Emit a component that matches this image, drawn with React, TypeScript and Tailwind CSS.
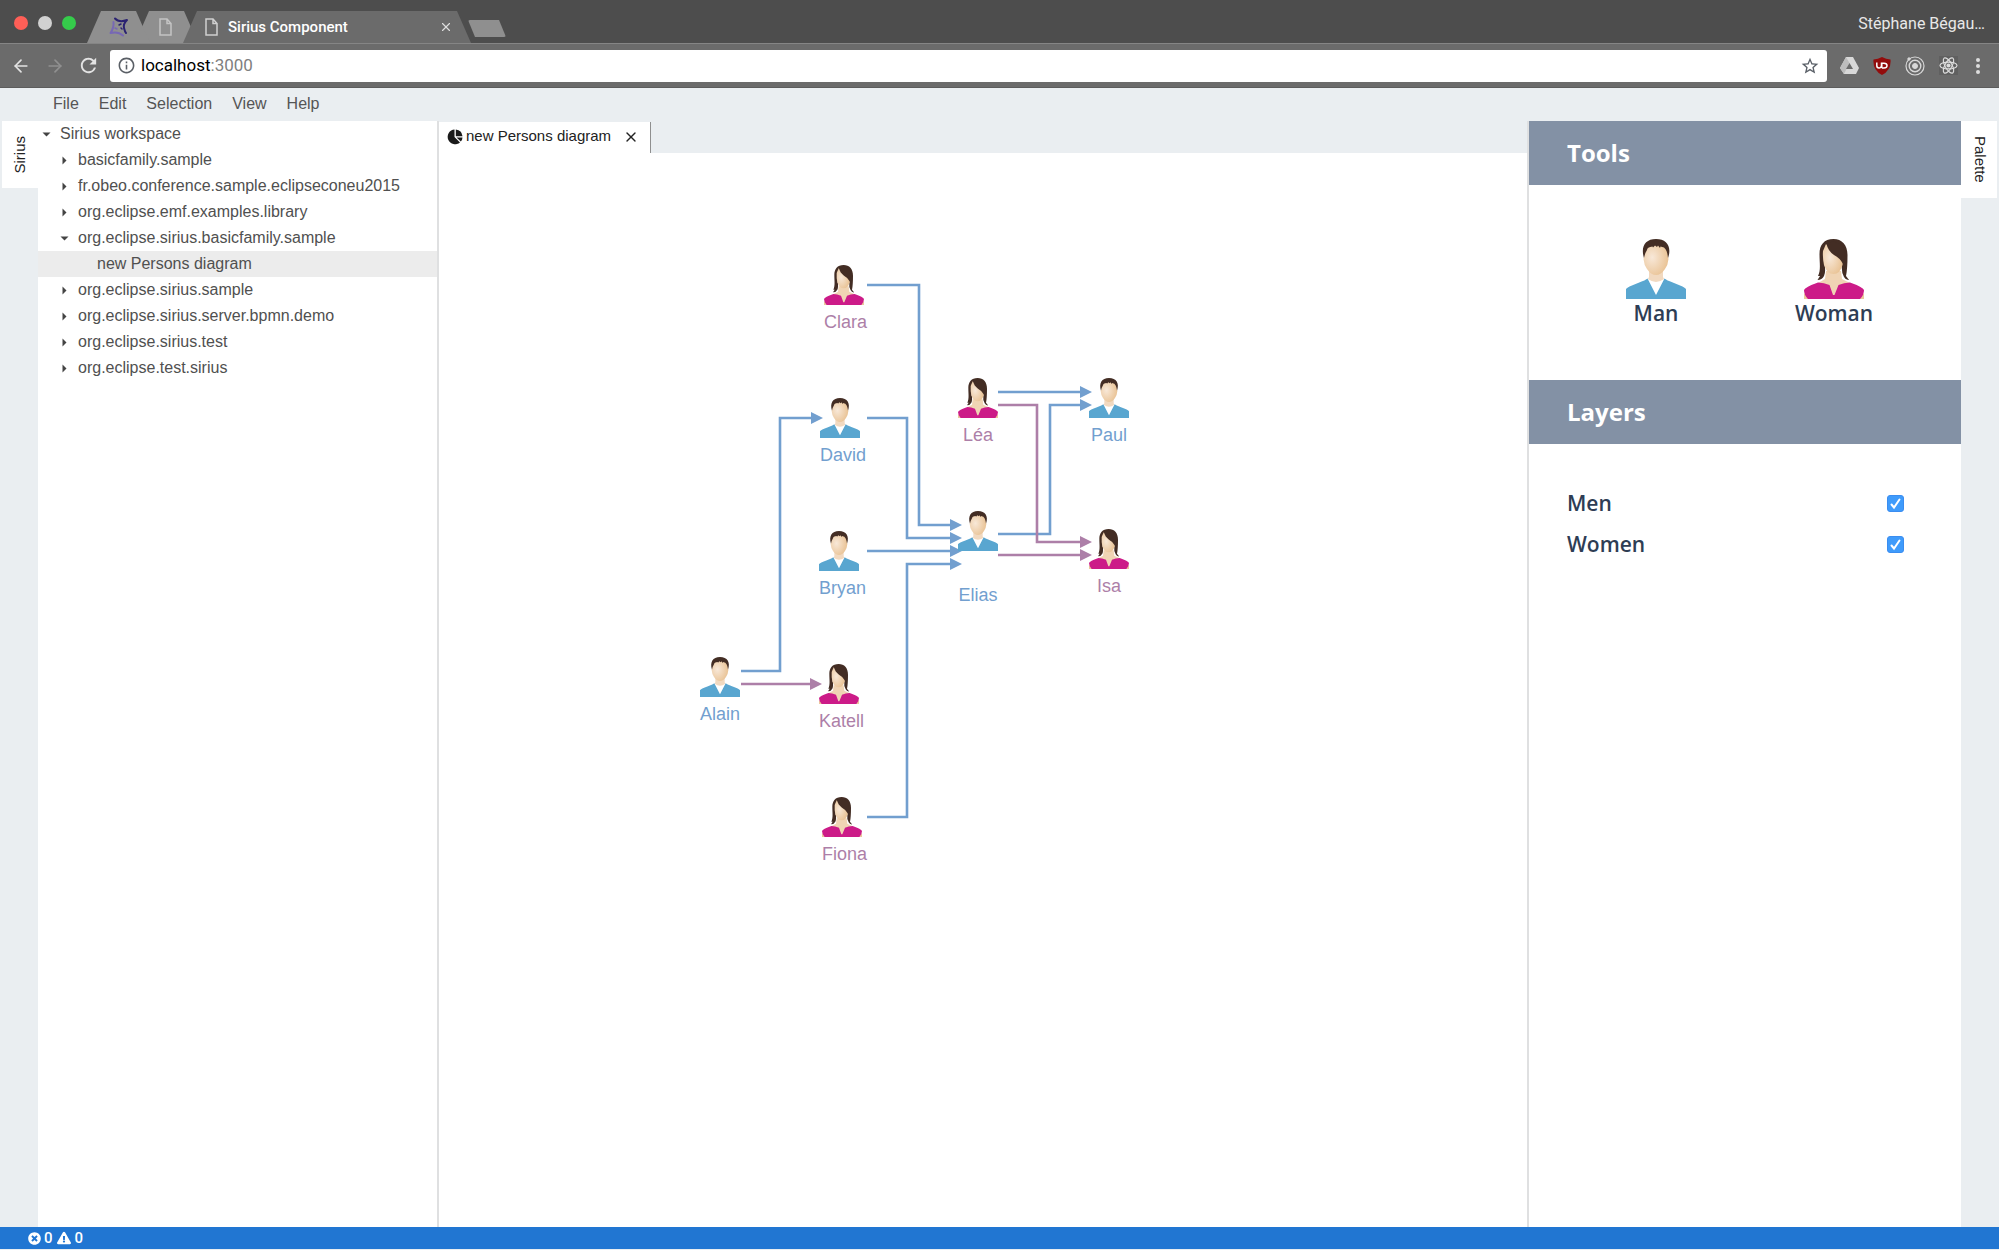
import { useState } from "react";
import type { ReactNode } from "react";
import { ArrowLeft, ArrowRight, X } from "lucide-react";
import { MdRefresh, MdStarBorder, MdInfoOutline } from "react-icons/md";
import { FaTimesCircle, FaExclamationTriangle } from "react-icons/fa";

type Sex = "man" | "woman";

type TreeItem = {
  label: string;
  level: 0 | 1 | 2;
  state: "open" | "closed" | "leaf";
  selected?: boolean;
};

const treeItems: TreeItem[] = [
  { label: "Sirius workspace", level: 0, state: "open" },
  { label: "basicfamily.sample", level: 1, state: "closed" },
  { label: "fr.obeo.conference.sample.eclipseconeu2015", level: 1, state: "closed" },
  { label: "org.eclipse.emf.examples.library", level: 1, state: "closed" },
  { label: "org.eclipse.sirius.basicfamily.sample", level: 1, state: "open" },
  { label: "new Persons diagram", level: 2, state: "leaf", selected: true },
  { label: "org.eclipse.sirius.sample", level: 1, state: "closed" },
  { label: "org.eclipse.sirius.server.bpmn.demo", level: 1, state: "closed" },
  { label: "org.eclipse.sirius.test", level: 1, state: "closed" },
  { label: "org.eclipse.test.sirius", level: 1, state: "closed" },
];

const levelPadding = ["pl-[4px]", "pl-[22px]", "pl-[41px]"];

type Person = {
  name: string;
  sex: Sex;
  x: number;
  y: number;
  align?: "start";
  lowLabel?: boolean;
};

const persons: Person[] = [
  { name: "Clara", sex: "woman", x: 385, y: 112, align: "start" },
  { name: "David", sex: "man", x: 381, y: 245, align: "start" },
  { name: "Bryan", sex: "man", x: 380, y: 378, align: "start" },
  { name: "Katell", sex: "woman", x: 380, y: 511, align: "start" },
  { name: "Fiona", sex: "woman", x: 383, y: 644, align: "start" },
  { name: "Alain", sex: "man", x: 261, y: 504 },
  { name: "Léa", sex: "woman", x: 519, y: 225 },
  { name: "Elias", sex: "man", x: 519, y: 358, lowLabel: true },
  { name: "Paul", sex: "man", x: 650, y: 225 },
  { name: "Isa", sex: "woman", x: 650, y: 376 },
];

const edges: { sex: Sex; path: string; tip: [number, number] }[] = [
  { sex: "man", path: "M428 132H480V372H512", tip: [523, 372] },
  { sex: "man", path: "M428 265H468V385H512", tip: [523, 385] },
  { sex: "man", path: "M428 398H512", tip: [523, 398] },
  { sex: "man", path: "M428 664H468V411H512", tip: [523, 411] },
  { sex: "man", path: "M302 518H341V265H373", tip: [384, 265] },
  { sex: "woman", path: "M302 531H372", tip: [383, 531] },
  { sex: "man", path: "M559 239H642", tip: [653, 239] },
  { sex: "man", path: "M559 381H611V252H642", tip: [653, 252] },
  { sex: "woman", path: "M559 252H598V389H642", tip: [653, 389] },
  { sex: "woman", path: "M559 402H642", tip: [653, 402] },
];

const edgeColor = { man: "#729fcf", woman: "#ad7fa8" };

function FaceGradients() {
  return (
    <svg width="0" height="0" className="absolute" aria-hidden="true">
      <defs>
        <radialGradient id="face" cx="0.35" cy="0.45" r="0.7">
          <stop offset="0" stopColor="#f8e8d8" />
          <stop offset="1" stopColor="#e8c090" />
        </radialGradient>
      </defs>
    </svg>
  );
}

function ManIcon({ className }: { className: string }) {
  return (
    <svg viewBox="0 0 60 60" className={className} aria-hidden="true">
      <path d="M22 39L30 42L38 39L39 44L31 58H29L21 44Z" fill="#fff" />
      <path d="M23 31H37V38L38 40Q30 46 22 40L23 38Z" fill="#f1d9c0" />
      <path d="M18 17Q17 4 30 4T42 17L42.500 20Q42 26 39 30Q35 36 30 36T21 30Q18 26 17.500 20Z" fill="url(#face)" />
      <path d="M18 19C14.500 8 19 0 30 0S46 8 42 19C41.500 15 41 11 38 8.500L34.500 7.500L34 9L32 6.500L31 8L29 6.500L27 8.500L26.500 7.500Q21 8 21 11Q19 14 18 19Z" fill="#432d24" />
      <path d="M0 60V50Q1 48 12 44Q20 41 21.500 39.500L30 56L38.500 39.500Q40 41 48 44Q59 48 60 50V60Z" fill="#59a6d0" />
    </svg>
  );
}

function WomanIcon({ className }: { className: string }) {
  return (
    <svg viewBox="0 0 60 60" className={className} aria-hidden="true">
      <path d="M22 32H37L38 40L46 44L35 58H24L14 44L21 40Z" fill="#f0d4b4" />
      <path d="M0 54L5 60H0ZM60 54L55 60H60Z" fill="#ecc79c" />
      <path d="M29.500 0C20 0 15.500 6 15.500 15C15.500 24 17 31 14 37L16 37L13.500 41Q18 41 20 37Q22 33 20.500 25L20 12H37L38 25Q37 33 40 38Q42 41.500 45 41L42 37Q43.500 30 43.500 16C43.500 6 38 0 29.500 0Z" fill="#432d24" />
      <path d="M19 12L22 5L38 18Q39.500 22 38.500 26Q36 35 29.500 35T20 26Q18.500 19 19 12Z" fill="url(#face)" />
      <path d="M22.500 5Q24 12 30 16Q36 19 39 25Q43 10 36 5Q29 0 22.500 5Z" fill="#432d24" />
      <path d="M0 51Q1 48 14 43.500Q20 43.500 25.500 46L29 56H30.500L34.500 46Q40 43.500 46 43.500Q59 48 60 51Q60 56 56 60H4Q0 56 0 51Z" fill="#cc1b88" />
    </svg>
  );
}

function PageIcon({ className }: { className: string }) {
  return (
    <svg viewBox="0 0 13 18" className={className} fill="none" stroke="currentColor" strokeWidth="1.500" aria-hidden="true">
      <path d="M1 1H8L12 5.500V17H1ZM8 1V5.500H12" />
    </svg>
  );
}

function PieIcon() {
  return (
    <svg viewBox="0 0 16 16" className="size-4 shrink-0" fill="#1a1a1a" aria-hidden="true">
      <path d="M7.500 .5A7.400 7.400 0 1 0 13 13.400L7.500 8Z" />
      <path d="M8.800 .5A7.500 7.500 0 0 1 15.500 7.200H8.800Z" />
      <path d="M9.500 8.400H15.500A7 7 0 0 1 13.800 12.600Z" />
    </svg>
  );
}

function BrowserTabs() {
  return (
    <div className="flex h-[43px] shrink-0 items-end bg-[#4d4d4d] pl-[14px] font-[Roboto,sans-serif]">
      <div className="flex w-[73px] shrink-0 gap-[10px] self-center pt-[2px]">
        <button aria-label="Close window" className="size-[14px] rounded-full bg-[#ff5f57]" />
        <button aria-label="Minimize window" className="size-[14px] rounded-full bg-[#d1d1d1]" />
        <button aria-label="Zoom window" className="size-[14px] rounded-full bg-[#35cc4b]" />
      </div>
      <button
        aria-label="Sirius"
        className="z-10 flex h-8 w-[63px] items-center justify-center bg-[#8f8f8f] [clip-path:polygon(0_100%,14px_0,49px_0,100%_100%)]"
      >
        <svg viewBox="0 0 20 20" className="size-5" fill="none" strokeLinecap="round" strokeLinejoin="round" aria-hidden="true">
          <path d="M6 1.500Q10 6 18 3Q14 7 15 11T17 16" stroke="#2b2272" strokeWidth="2" />
          <path d="M4.500 5Q5 11 1.500 16Q9 14 14 18.500" stroke="#7768b4" strokeWidth="2" />
          <path d="M10 8L12 7M12 11L13 12" stroke="#2b2272" strokeWidth="1.500" />
          <path d="M6 11L8 12" stroke="#7768b4" strokeWidth="1.500" />
        </svg>
      </button>
      <button
        aria-label="New page"
        className="-ml-[15px] flex h-8 w-[63px] items-center justify-center bg-[#8f8f8f] pr-[2px] [clip-path:polygon(0_100%,14px_0,49px_0,100%_100%)]"
      >
        <PageIcon className="h-[18px] w-[13px] text-[#c4c4c4]" />
      </button>
      <div className="z-10 -ml-[15px] flex h-8 w-[288px] items-center bg-[#6b6b6b] pr-[18px] pl-[22px] [clip-path:polygon(0_100%,14px_0,274px_0,100%_100%)]">
        <PageIcon className="h-[18px] w-[13px] text-[#d0d0d0]" />
        <span className="ml-[10px] flex-1 text-left text-[15px] font-medium text-white">Sirius Component</span>
        <button aria-label="Close tab" className="text-[#dddddd]">
          <X size={14} strokeWidth={2} />
        </button>
      </div>
      <button
        aria-label="New tab"
        className="-ml-[3px] mb-[6px] h-[17px] w-[38px] rounded-[2px] bg-[#8f8f8f] [clip-path:polygon(0_0,31px_0,100%_100%,7px_100%)]"
      />
      <span className="mr-[14px] mb-[7px] ml-auto text-[16px] text-[#e8e8e8]">Stéphane Bégau…</span>
    </div>
  );
}

function BrowserToolbar() {
  return (
    <div className="flex h-[45px] shrink-0 items-center border-t border-b border-t-[#858585] border-b-[#5c5c5c] bg-[#6b6b6b] pr-[15px] pl-[11px] font-[Roboto,sans-serif]">
      <button aria-label="Back" className="w-[34px] text-[#e3e3e3]">
        <ArrowLeft size={20} strokeWidth={2} />
      </button>
      <button aria-label="Forward" className="w-[32px] text-[#909090]">
        <ArrowRight size={20} strokeWidth={2} />
      </button>
      <button aria-label="Reload" className="w-[33px] text-[#e3e3e3]">
        <MdRefresh size={23} />
      </button>
      <div className="flex h-8 flex-1 items-center rounded-[3px] bg-white pr-[7px] pl-[7px]">
        <MdInfoOutline size={19} className="text-[#5a5f66]" />
        <a href="#" aria-label="Address" className="ml-[5px] flex-1 text-[17px] text-black">
          localhost<span className="text-[#808080]">:3000</span>
        </a>
        <button aria-label="Bookmark" className="text-[#5a6068]">
          <MdStarBorder size={20} />
        </button>
      </div>
      <div className="ml-[13px] flex items-center gap-[14px]">
        <svg viewBox="0 0 19 18" className="h-[18px] w-[19px]" aria-hidden="true">
          <path d="M6 0H13L19 11L16 17H4L0 11Z" fill="#d8d8d8" />
          <path d="M6 0L9.500 6L4 17L0 11Z" fill="#bdbdbd" />
          <path d="M9.500 6L13 12H6Z" fill="#6b6b6b" />
        </svg>
        <svg viewBox="0 0 18 18" className="size-[18px]" aria-hidden="true">
          <path d="M9 0Q13 2 17.500 2.500Q18.500 13 9 18Q-.5 13 .5 2.500Q5 2 9 0Z" fill="#930c0c" />
          <path d="M3.800 5.500V8.500Q3.800 11 6 11T8.500 8.500V5.500M8.800 11V6.200H11Q14 6.200 14 8.600T11 11H8.800" fill="none" stroke="#fff" strokeWidth="1.500" />
        </svg>
        <svg viewBox="0 0 20 20" className="size-5" fill="none" stroke="#d8d8d8" aria-hidden="true">
          <circle cx="10" cy="10" r="9" strokeWidth="1.200" />
          <circle cx="10" cy="10" r="5.800" strokeWidth="1.400" />
          <circle cx="10" cy="10" r="2.500" fill="#d8d8d8" />
          <circle cx="4" cy="3" r="1.200" fill="#d8d8d8" />
        </svg>
        <svg viewBox="0 0 20 20" className="size-[19px] bg-[#606060]" fill="none" stroke="#dedede" strokeWidth="1.200" aria-hidden="true">
          <ellipse cx="10" cy="10" rx="9" ry="3.600" />
          <ellipse cx="10" cy="10" rx="9" ry="3.600" transform="rotate(60 10 10)" />
          <ellipse cx="10" cy="10" rx="9" ry="3.600" transform="rotate(120 10 10)" />
          <circle cx="10" cy="10" r="1.600" fill="#dedede" />
        </svg>
        <button aria-label="Browser menu" className="flex w-[12px] flex-col items-center gap-[2px]">
          <span className="size-1 rounded-full bg-[#dddddd]" />
          <span className="size-1 rounded-full bg-[#dddddd]" />
          <span className="size-1 rounded-full bg-[#dddddd]" />
        </button>
      </div>
    </div>
  );
}

function MenuBar() {
  return (
    <nav className="flex h-[33px] shrink-0 items-center gap-[20px] pb-[2px] pl-[53px] text-[16px] text-[#555555]">
      {["File", "Edit", "Selection", "View", "Help"].map((item) => (
        <button key={item}>{item}</button>
      ))}
    </nav>
  );
}

function Disclosure({ state }: { state: TreeItem["state"] }) {
  if (state === "leaf") return <span className="w-[9px]" />;
  return (
    <svg viewBox="0 0 9 9" className="size-[9px]" fill="#444" aria-hidden="true">
      {state === "open" ? <path d="M.5 2.500H8.500L4.500 6.500Z" /> : <path d="M2.500 .5V8.500L6.500 4.500Z" />}
    </svg>
  );
}

function Explorer() {
  return (
    <aside className="w-[401px] shrink-0 border-r-2 border-[#dfe0e1] bg-white">
      <ul>
        {treeItems.map((item) => (
          <li key={item.label} className={item.selected ? "bg-[#ececec]" : ""}>
            <button
              className={`flex h-[26px] w-full items-center gap-[9px] text-left text-[16px] text-[#505050] ${levelPadding[item.level]}`}
            >
              <Disclosure state={item.state} />
              {item.label}
            </button>
          </li>
        ))}
      </ul>
    </aside>
  );
}

function Diagram({ showMen, showWomen }: { showMen: boolean; showWomen: boolean }) {
  const visible = (sex: Sex) => (sex === "man" ? showMen : showWomen);
  return (
    <div className="relative flex-1 overflow-hidden bg-white">
      <svg className="absolute inset-0 size-full" aria-hidden="true">
        {edges
          .filter((edge) => visible(edge.sex))
          .map((edge) => (
            <g key={edge.path}>
              <path d={edge.path} fill="none" stroke={edgeColor[edge.sex]} strokeWidth="2.600" />
              <path
                d={`M${edge.tip[0]} ${edge.tip[1]}l-12 -6v12Z`}
                fill={edgeColor[edge.sex]}
              />
            </g>
          ))}
      </svg>
      {persons
        .filter((person) => visible(person.sex))
        .map((person) => (
          <div
            key={person.name}
            className={`absolute flex w-10 flex-col text-[18px] leading-6 ${
              person.align === "start" ? "items-start" : "items-center"
            } ${person.lowLabel ? "gap-8" : "gap-[5px]"} ${
              person.sex === "man" ? "text-[#729fcf]" : "text-[#ad7fa8]"
            }`}
            style={{ left: person.x, top: person.y }}
          >
            {person.sex === "man" ? <ManIcon className="size-10" /> : <WomanIcon className="size-10" />}
            <span>{person.name}</span>
          </div>
        ))}
    </div>
  );
}

function PanelHeader({ children }: { children: ReactNode }) {
  return (
    <h2 className="flex h-16 items-center bg-[#8391a5] px-[38px] text-[24px] font-bold text-white">{children}</h2>
  );
}

function LayerRow({
  id,
  label,
  checked,
  onChange,
}: {
  id: string;
  label: string;
  checked: boolean;
  onChange: (value: boolean) => void;
}) {
  return (
    <div className="flex h-[41px] items-center justify-between">
      <label htmlFor={id}>{label}</label>
      <span className="grid size-[17px] place-items-center">
        <input
          id={id}
          type="checkbox"
          checked={checked}
          onChange={(event) => onChange(event.target.checked)}
          className="col-start-1 row-start-1 size-[17px] appearance-none rounded-[3px] border border-[#3b8df0] bg-white checked:bg-[#3f9bfb]"
        />
        {checked && (
          <svg viewBox="0 0 17 17" className="pointer-events-none col-start-1 row-start-1 size-[17px]" fill="none" stroke="#fff" strokeWidth="2" strokeLinecap="round" aria-hidden="true">
            <path d="M4.500 9.500L7 12.500L12.500 4.500" />
          </svg>
        )}
      </span>
    </div>
  );
}

export default function App() {
  const [showMen, setShowMen] = useState(true);
  const [showWomen, setShowWomen] = useState(true);

  return (
    <div className="flex h-screen flex-col bg-[#eaeef1] pb-px font-['Liberation_Sans',Arial,sans-serif]">
      <FaceGradients />
      <BrowserTabs />
      <BrowserToolbar />
      <MenuBar />
      <main className="flex min-h-0 flex-1">
        <div className="w-[38px] shrink-0 pl-[2px]">
          <button className="flex h-[67px] w-full items-center justify-center bg-white text-[15px] text-[#222222]">
            <span className="rotate-180 [writing-mode:vertical-rl]">Sirius</span>
          </button>
        </div>
        <Explorer />
        <section className="flex min-w-0 flex-1 flex-col">
          <div className="flex h-8 shrink-0 pt-px">
            <div className="flex w-[212px] items-center justify-between border-r border-[#8f8f8f] bg-white pr-[11px] pb-[2px] pl-[8px] text-[15px] text-[#222222]">
              <button className="flex items-center gap-[3px]">
                <PieIcon />
                new Persons diagram
              </button>
              <button aria-label="Close editor">
                <X size={16} strokeWidth={2} />
              </button>
            </div>
          </div>
          <Diagram showMen={showMen} showWomen={showWomen} />
        </section>
        <aside className="w-[434px] shrink-0 border-l-2 border-[#dfe0e1] bg-white font-['Open_Sans',sans-serif] text-[21px] font-semibold text-[#2e3d54]">
          <PanelHeader>Tools</PanelHeader>
          <div className="grid h-[195px] grid-cols-2 items-start px-[38px] pt-[54px] leading-7">
            <button className="flex flex-col items-center">
              <ManIcon className="size-[60px]" />
              Man
            </button>
            <button className="flex flex-col items-center">
              <WomanIcon className="size-[60px]" />
              Woman
            </button>
          </div>
          <PanelHeader>Layers</PanelHeader>
          <div className="pt-[39px] pr-[57px] pl-[38px]">
            <LayerRow id="layer-men" label="Men" checked={showMen} onChange={setShowMen} />
            <LayerRow id="layer-women" label="Women" checked={showWomen} onChange={setShowWomen} />
          </div>
        </aside>
        <div className="w-[38px] shrink-0 pr-[2px]">
          <button className="flex h-[77px] w-full items-center justify-center bg-white pl-[2px] text-[15px] text-[#222222]">
            <span className="[writing-mode:vertical-rl]">Palette</span>
          </button>
        </div>
      </main>
      <footer className="flex h-[22px] shrink-0 items-center bg-[#2176d2] pl-[28px] font-[Roboto,sans-serif] text-[15px] font-medium text-white">
        <FaTimesCircle size={13} />
        <span className="ml-[3px]">0</span>
        <FaExclamationTriangle size={14} className="ml-[4px]" />
        <span className="ml-[4px]">0</span>
      </footer>
    </div>
  );
}
